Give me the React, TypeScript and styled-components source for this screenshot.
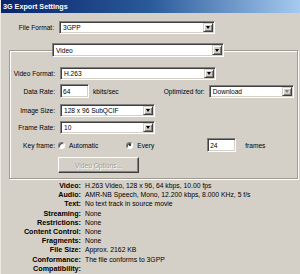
import React from 'react'
import styled, { createGlobalStyle } from 'styled-components'

const GlobalStyle = createGlobalStyle`
  html, body {
    margin: 0;
    padding: 0;
    background: #d4d0c8;
  }
  * {
    box-sizing: border-box;
  }
`

const Window = styled.div`
  width: 300px;
  height: 274px;
  overflow: hidden;
  background: #d4d0c8;
  border-left: 1px solid #ece9e2;
  font-family: 'Liberation Sans', Arial, sans-serif;
  font-size: 6.6px;
  color: #000;
`

const TitleBar = styled.div`
  height: 13px;
  display: flex;
  align-items: center;
  padding-left: 2px;
  background: linear-gradient(to right, #0a246a 0%, #2a5a9a 50%, #a6caf0 100%);
  color: #fff;
  font-weight: bold;
  font-size: 7.2px;
`

const Body = styled.div`
  padding: 8px 3px 0 7px;
`

const Row = styled.div<{ $mt?: number; $pl?: number }>`
  display: flex;
  align-items: center;
  margin-top: ${({ $mt }) => $mt ?? 0}px;
  padding-left: ${({ $pl }) => $pl ?? 0}px;
`

const Label = styled.span<{ $w?: number }>`
  width: ${({ $w }) => $w ?? 45}px;
  text-align: right;
  margin-right: 5px;
  white-space: nowrap;
`

const Text = styled.span<{ $ml?: number }>`
  margin-left: ${({ $ml }) => $ml ?? 0}px;
  white-space: nowrap;
`

const SelectBox = styled.div<{ $w: number; $h?: number; $ml?: number }>`
  width: ${({ $w }) => $w}px;
  height: ${({ $h }) => $h ?? 13}px;
  margin-left: ${({ $ml }) => $ml ?? 0}px;
  flex-shrink: 0;
  display: flex;
  align-items: stretch;
  background: #fff;
  border: 1px solid;
  border-color: #808080 #fff #fff #808080;
  box-shadow: inset 1px 1px 0 #404040, inset -1px -1px 0 #d4d0c8;
  padding: 1px;
`

const SelectValue = styled.span`
  flex: 1;
  display: flex;
  align-items: center;
  padding-left: 2px;
  white-space: nowrap;
  overflow: hidden;
`

const DropButton = styled.span`
  width: 10px;
  display: flex;
  align-items: center;
  justify-content: center;
  background: #d4d0c8;
  border: 1px solid;
  border-color: #d4d0c8 #404040 #404040 #d4d0c8;
  box-shadow: inset 1px 1px 0 #fff, inset -1px -1px 0 #808080;
`

const Arrow = styled.span<{ $disabled?: boolean }>`
  width: 0;
  height: 0;
  border-left: 2.5px solid transparent;
  border-right: 2.5px solid transparent;
  border-top: 3px solid ${({ $disabled }) => ($disabled ? '#808080' : '#000')};
`

const Input = styled.div<{ $w: number; $ml?: number }>`
  width: ${({ $w }) => $w}px;
  height: 14px;
  margin-left: ${({ $ml }) => $ml ?? 0}px;
  display: flex;
  align-items: center;
  padding-left: 2px;
  background: #fff;
  border: 1px solid;
  border-color: #808080 #fff #fff #808080;
  box-shadow: inset 1px 1px 0 #404040, inset -1px -1px 0 #d4d0c8;
`

const Group = styled.fieldset`
  margin: 9px 0 0 1px;
  padding: 0 0 5px 0;
  width: 289px;
  border: 1px solid #a09c94;
  box-shadow: inset 1px 1px 0 #fff, 1px 1px 0 #fff;
`

const Legend = styled.legend`
  margin-left: 42px;
  padding: 0;
`

const Radio = styled.span<{ $checked?: boolean }>`
  width: 7px;
  height: 7px;
  border-radius: 50%;
  background: #fff;
  border: 1px solid;
  border-color: #808080 #fff #fff #808080;
  box-shadow: inset 1px 1px 0 #404040;
  display: flex;
  align-items: center;
  justify-content: center;
  margin-right: 4px;

  &::after {
    content: '';
    width: 2px;
    height: 2px;
    border-radius: 50%;
    background: ${({ $checked }) => ($checked ? '#000' : 'transparent')};
  }
`

const RadioLabel = styled.label<{ $ml?: number }>`
  display: flex;
  align-items: center;
  margin-left: ${({ $ml }) => $ml ?? 0}px;
`

const Button = styled.div`
  width: 81px;
  height: 16px;
  margin-left: 48px;
  display: flex;
  align-items: center;
  justify-content: center;
  background: #d4d0c8;
  border: 1px solid;
  border-color: #fff #404040 #404040 #fff;
  box-shadow: inset -1px -1px 0 #808080;
  color: #a09c94;
  text-shadow: 1px 1px 0 #fff;
`

const Info = styled.div`
  margin-top: 2px;
  display: grid;
  grid-template-columns: 73px 1fr;
  column-gap: 4px;
  line-height: 9.2px;
  font-size: 6.8px;
`

const InfoKey = styled.span`
  text-align: right;
  font-weight: bold;
  font-size: 7.2px;
  white-space: nowrap;
`

const InfoValue = styled.span`
  white-space: nowrap;
`

function Select({ value, width, disabled, ml }: { value: string; width: number; disabled?: boolean; ml?: number }) {
  return (
    <SelectBox $w={width} $ml={ml}>
      <SelectValue>{value}</SelectValue>
      <DropButton>
        <Arrow $disabled={disabled} />
      </DropButton>
    </SelectBox>
  )
}

const info: [string, string][] = [
  ['Video:', 'H.263 Video, 128 x 96, 64 kbps, 10.00 fps'],
  ['Audio:', 'AMR-NB Speech, Mono, 12.200 kbps, 8.000 KHz, 5 f/s'],
  ['Text:', 'No text track in source movie'],
  ['Streaming:', 'None'],
  ['Restrictions:', 'None'],
  ['Content Control:', 'None'],
  ['Fragments:', 'None'],
  ['File Size:', 'Approx. 2162 KB'],
  ['Conformance:', 'The file conforms to 3GPP'],
  ['Compatibility:', ''],
]

export default function App() {
  return (
    <Window>
      <GlobalStyle />
      <TitleBar>3G Export Settings</TitleBar>
      <Body>
        <Row $pl={1}>
          <Label>File Format:</Label>
          <Select value="3GPP" width={156} />
        </Row>

        <Group>
          <Legend>
            <SelectBox $w={172} $h={14}>
              <SelectValue>Video</SelectValue>
              <DropButton>
                <Arrow />
              </DropButton>
            </SelectBox>
          </Legend>

          <Row $mt={10}>
            <Label>Video Format:</Label>
            <Select value="H.263" width={156} />
          </Row>
          <Row $mt={4}>
            <Label>Data Rate:</Label>
            <Input $w={29}>64</Input>
            <Text $ml={4}>kbits/sec</Text>
            <Text $ml={45}>Optimized for:</Text>
            <Select value="Download" width={85} ml={4} disabled />
          </Row>
          <Row $mt={6}>
            <Label>Image Size:</Label>
            <Select value="128 x 96 SubQCIF" width={95} />
          </Row>
          <Row $mt={4}>
            <Label>Frame Rate:</Label>
            <Select value="10" width={95} />
          </Row>
          <Row $mt={4}>
            <Label>Key frame:</Label>
            <RadioLabel $ml={-2}>
              <Radio />
              Automatic
            </RadioLabel>
            <RadioLabel $ml={28}>
              <Radio $checked />
              Every
            </RadioLabel>
            <Input $w={29} $ml={53}>24</Input>
            <Text $ml={9}>frames</Text>
          </Row>
          <Row $mt={5}>
            <Button>Video Options...</Button>
          </Row>
        </Group>

        <Info>
          {info.map(([k, v]) => (
            <React.Fragment key={k}>
              <InfoKey>{k}</InfoKey>
              <InfoValue>{v}</InfoValue>
            </React.Fragment>
          ))}
        </Info>
      </Body>
    </Window>
  )
}
